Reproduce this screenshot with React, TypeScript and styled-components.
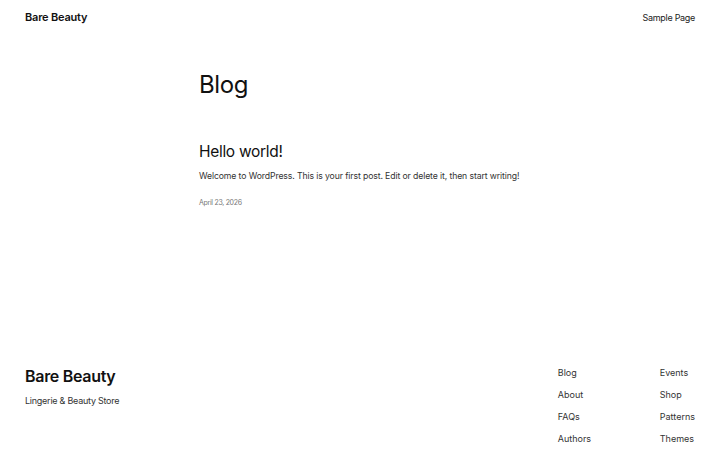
import { createGlobalStyle } from "styled-components";
import styled from "styled-components";

const GlobalStyle = createGlobalStyle`
    html, body {
        margin: 0;
        padding: 0;
        background: #fff;
    }
    body {
        font-family: Inter, "Noto Sans", sans-serif;
        color: #111;
        -webkit-font-smoothing: antialiased;
    }
    a {
        color: inherit;
        text-decoration: none;
    }
`;

const Page = styled.div`
    width: 720px;
    height: 450px;
    display: flex;
    flex-direction: column;
    overflow: hidden;
`;

const Header = styled.header`
    display: flex;
    align-items: center;
    justify-content: space-between;
    height: 34px;
    padding: 0 25px;
`;

const SiteTitle = styled.a`
    font-size: 11px;
    font-weight: 600;
    letter-spacing: -0.2px;
`;

const NavLink = styled.a`
    font-size: 9px;
    letter-spacing: -0.3px;
    color: #222;
`;

const Main = styled.main`
    width: 322px;
    margin: 0 auto;
    padding-top: 35px;
    flex: 1;
`;

const PageTitle = styled.h1`
    margin: 0;
    font-size: 24px;
    font-weight: 400;
    letter-spacing: -0.4px;
    line-height: 32px;
`;

const Post = styled.article`
    margin-top: 40px;
`;

const PostTitle = styled.h2`
    margin: 0;
    font-size: 15.5px;
    font-weight: 400;
    letter-spacing: -0.3px;
    line-height: 22px;
`;

const Excerpt = styled.p`
    margin: 6px 0 0;
    font-size: 8.7px;
    letter-spacing: -0.12px;
    white-space: nowrap;
    color: #333;
    line-height: 14px;
`;

const PostDate = styled.time`
    display: block;
    margin-top: 15px;
    font-size: 7px;
    letter-spacing: -0.3px;
    color: #777;
`;

const Footer = styled.footer`
    display: flex;
    justify-content: space-between;
    padding: 0 25px;
    height: 84px;
`;

const Brand = styled.div`
    display: flex;
    flex-direction: column;
`;

const FooterTitle = styled.a`
    font-size: 16px;
    font-weight: 600;
    letter-spacing: -0.3px;
    line-height: 20px;
`;

const Tagline = styled.p`
    margin: 9px 0 0;
    font-size: 9px;
    letter-spacing: -0.25px;
    color: #333;
`;

const Columns = styled.div`
    display: grid;
    grid-template-columns: 102px auto;
`;

const Column = styled.ul`
    list-style: none;
    margin: 0;
    padding: 0;
    display: flex;
    flex-direction: column;
    gap: 8px;
`;

const FooterLink = styled.li`
    font-size: 9px;
    line-height: 14px;
    color: #333;
`;

const left = ["Blog", "About", "FAQs", "Authors"];
const right = ["Events", "Shop", "Patterns", "Themes"];

function App() {
    return (
        <Page>
            <GlobalStyle />
            <Header>
                <SiteTitle href="#">Bare Beauty</SiteTitle>
                <NavLink href="#">Sample Page</NavLink>
            </Header>
            <Main>
                <PageTitle>Blog</PageTitle>
                <Post>
                    <PostTitle>Hello world!</PostTitle>
                    <Excerpt>
                        Welcome to WordPress. This is your first post. Edit or delete it, then start writing!
                    </Excerpt>
                    <PostDate>April 23, 2026</PostDate>
                </Post>
            </Main>
            <Footer>
                <Brand>
                    <FooterTitle href="#">Bare Beauty</FooterTitle>
                    <Tagline>Lingerie &amp; Beauty Store</Tagline>
                </Brand>
                <Columns>
                    <Column>
                        {left.map((item) => (
                            <FooterLink key={item}>{item}</FooterLink>
                        ))}
                    </Column>
                    <Column>
                        {right.map((item) => (
                            <FooterLink key={item}>{item}</FooterLink>
                        ))}
                    </Column>
                </Columns>
            </Footer>
        </Page>
    );
}

export default App;
